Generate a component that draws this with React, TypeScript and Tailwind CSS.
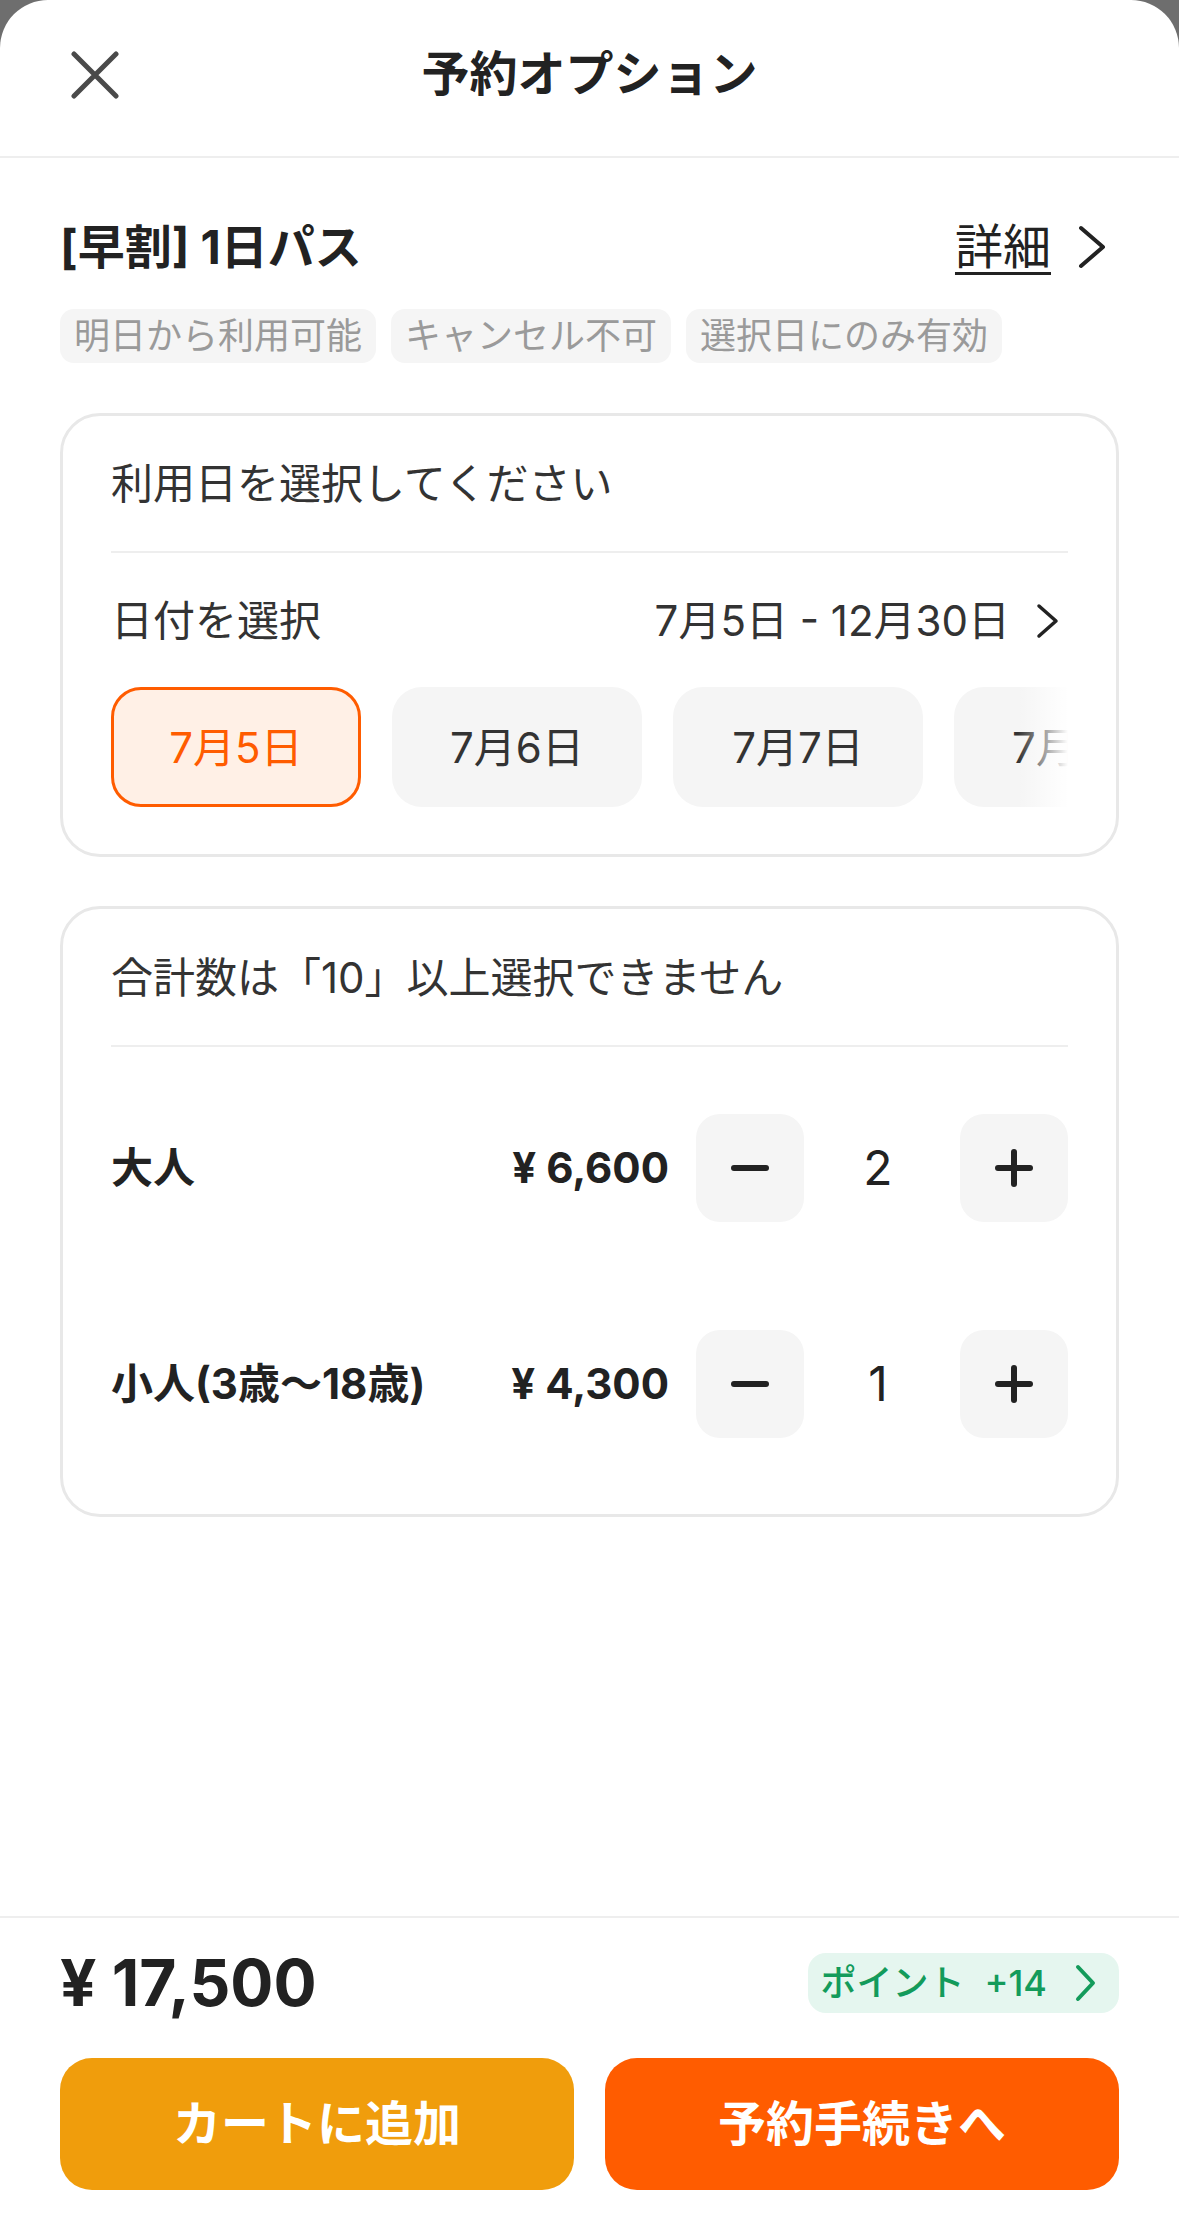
import React from 'react';

const tags = ['明日から利用可能', 'キャンセル不可', '選択日にのみ有効'];
const dates = ['7月5日', '7月6日', '7月7日', '7月8日'];

const tickets = [
  { name: '大人', price: '¥ 6,600', count: 2 },
  { name: '小人(3歳〜18歳)', price: '¥ 4,300', count: 1 },
];

function StepButton({ kind }: { kind: 'minus' | 'plus' }) {
  return (
    <button className="w-[108px] h-[108px] rounded-[24px] bg-[#f5f5f5] flex items-center justify-center shrink-0">
      <svg width="40" height="40" viewBox="0 0 40 40" fill="none" stroke="#222" strokeWidth={6} strokeLinecap="round">
        <path d="M4 20h32" />
        {kind === 'plus' && <path d="M20 4v32" />}
      </svg>
    </button>
  );
}

function TicketRow({ name, price, count }: { name: string; price: string; count: number }) {
  return (
    <div className="flex items-center">
      <div className="flex-1 text-[42px] font-bold leading-[56px] text-[#222]">{name}</div>
      <div className="text-[42px] font-bold leading-[56px] text-[#222] mr-[27px]">{price}</div>
      <StepButton kind="minus" />
      <div className="w-[156px] pr-[8px] text-center text-[48px] leading-[56px] text-[#222]">{count}</div>
      <StepButton kind="plus" />
    </div>
  );
}

export default function App() {
  return (
    <div className="w-[1179px] h-[2228px] bg-[#6e6e6e] font-['Inter','Noto_Sans_CJK_JP',sans-serif]">
      <div className="h-full bg-white rounded-t-[48px] flex flex-col overflow-hidden">
        {/* header */}
        <div className="relative h-[158px] pb-[8px] flex items-center justify-center border-b-2 border-[#eeeeee] shrink-0">
          <button className="absolute left-[71px] top-[51px] w-[48px] h-[48px]">
            <svg width="48" height="48" viewBox="0 0 48 48" fill="none" stroke="#4a4a4a" strokeWidth={5} strokeLinecap="round">
              <path d="M3 3l42 42M45 3L3 45" />
            </svg>
          </button>
          <h1 className="text-[48px] font-bold leading-[60px] text-[#222]">予約オプション</h1>
        </div>

        {/* body */}
        <div className="flex-1 px-[60px] pt-[59px]">
          <div className="flex items-center justify-between h-[60px]">
            <div className="text-[47px] font-bold leading-[60px] text-[#222]">[早割] 1日パス</div>
            <div className="flex items-center gap-[24px] text-[#222]">
              <span className="text-[48px] leading-[60px] underline underline-offset-[8px] decoration-[3px]">詳細</span>
              <svg width="34" height="48" viewBox="0 0 34 48" fill="none" stroke="#222" strokeWidth={4} strokeLinecap="round" strokeLinejoin="round" className="mr-[10px]">
                <path d="M6 5l22 19L6 43" />
              </svg>
            </div>
          </div>

          <div className="flex gap-[15px] mt-[32px]">
            {tags.map((t) => (
              <span key={t} className="h-[54px] px-[14px] rounded-[14px] bg-[#f5f5f5] text-[36px] leading-[54px] text-[#9a9a9a]">
                {t}
              </span>
            ))}
          </div>

          {/* date card */}
          <div className="mt-[50px] border-[3px] border-[#e8e8e8] rounded-[40px] px-[48px] pt-[40px] pb-[47px]">
            <div className="text-[42px] leading-[56px] text-[#333] pb-[39px] border-b-2 border-[#eeeeee]">
              利用日を選択してください
            </div>
            <div className="flex items-center justify-between mt-[40px] h-[56px]">
              <span className="text-[42px] leading-[56px] text-[#333]">日付を選択</span>
              <div className="flex items-center gap-[24px]">
                <span className="text-[42px] leading-[56px] text-[#333]">7月5日 - 12月30日</span>
                <svg width="28" height="40" viewBox="0 0 28 40" fill="none" stroke="#222" strokeWidth={3.5} strokeLinecap="round" strokeLinejoin="round" className="mr-[6px]">
                  <path d="M5 5l17 15L5 35" />
                </svg>
              </div>
            </div>
            <div className="relative mt-[38px] overflow-hidden">
              <div className="flex gap-[31px]">
                {dates.map((d, i) => (
                  <div
                    key={d}
                    className={
                      i === 0
                        ? 'w-[250px] h-[120px] shrink-0 rounded-[30px] border-[3px] border-[#ff5c00] bg-[#fff0e6] flex items-center justify-center text-[42px] text-[#ff5c00]'
                        : 'w-[250px] h-[120px] shrink-0 rounded-[30px] bg-[#f5f5f5] flex items-center justify-center text-[42px] text-[#333]'
                    }
                  >
                    {d}
                  </div>
                ))}
              </div>
              <div className="absolute right-0 top-0 bottom-0 w-[50px] bg-linear-to-l from-white to-transparent" />
            </div>
          </div>

          {/* ticket card */}
          <div className="mt-[49px] border-[3px] border-[#e8e8e8] rounded-[40px] px-[48px] pt-[41px] pb-[76px]">
            <div className="text-[42px] leading-[56px] text-[#333] pb-[39px] border-b-2 border-[#eeeeee]">
              合計数は「10」以上選択できません
            </div>
            <div className="flex flex-col gap-[108px] mt-[67px]">
              {tickets.map((t) => (
                <TicketRow key={t.name} {...t} />
              ))}
            </div>
          </div>
        </div>

        {/* footer */}
        <div className="border-t-2 border-[#eeeeee] px-[60px] pt-[35px] pb-[38px] shrink-0">
          <div className="flex items-center justify-between h-[60px]">
            <div className="text-[64px] font-bold leading-[60px] text-[#222]">¥ 17,500</div>
            <div className="h-[60px] rounded-[18px] bg-[#e5f6ef] flex items-center pl-[12px] pr-[22px] text-[#139b5b]">
              <span className="text-[36px] font-medium leading-[60px]">ポイント</span>
              <span className="text-[36px] font-medium leading-[60px] ml-[20px]">+14</span>
              <svg width="22" height="40" viewBox="0 0 22 40" fill="none" stroke="#139b5b" strokeWidth={4} strokeLinecap="round" strokeLinejoin="round" className="ml-[28px]">
                <path d="M3 4l15 16L3 36" />
              </svg>
            </div>
          </div>
          <div className="flex gap-[31px] mt-[45px]">
            <button className="flex-1 h-[132px] rounded-[32px] bg-[#f09d0c] text-white text-[48px] font-bold">
              カートに追加
            </button>
            <button className="flex-1 h-[132px] rounded-[32px] bg-[#ff5c00] text-white text-[48px] font-bold">
              予約手続きへ
            </button>
          </div>
        </div>
      </div>
    </div>
  );
}
